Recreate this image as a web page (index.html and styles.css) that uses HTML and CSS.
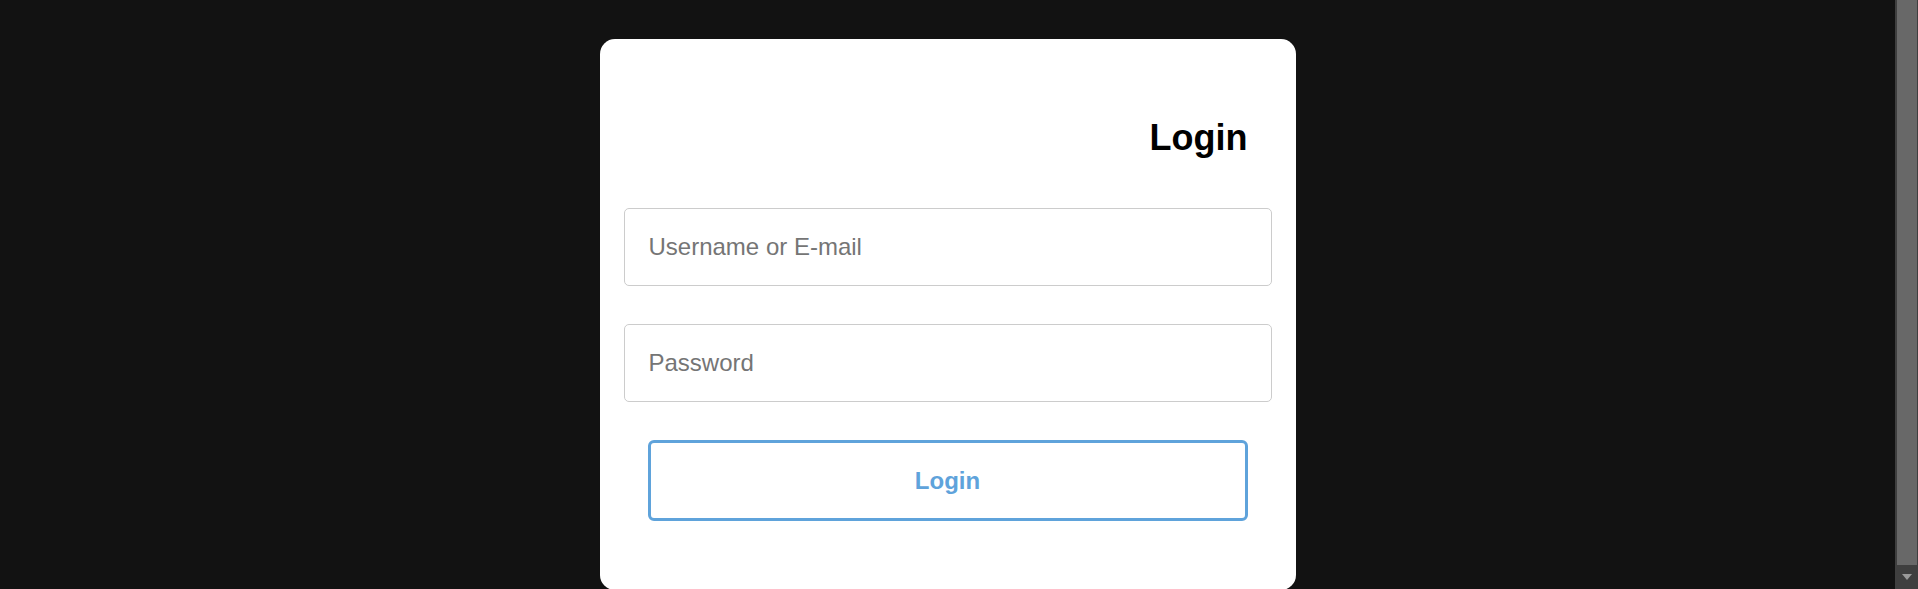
FILE: index.html
```html
<!DOCTYPE html>
<html lang="en">
<head>
<meta charset="utf-8">
<title>Login</title>
<link rel="stylesheet" href="styles.css">
</head>
<body>
<div class="page">
  <form class="card" onsubmit="return false">
    <h2 class="title">Login</h2>
    <input class="field field-user" type="text" placeholder="Username or E-mail">
    <input class="field field-pass" type="password" placeholder="Password">
    <button class="btn" type="submit">Login</button>
  </form>
</div>
<div class="scrollbar" aria-hidden="true">
  <div class="scroll-thumb"></div>
  <div class="scroll-arrow"><span class="arrow-down"></span></div>
</div>
</body>
</html>
```

FILE: styles.css
```css
html, body {
  margin: 0;
  padding: 0;
  height: 100%;
  overflow: hidden;
}

body {
  background: #121212;
  font-family: "Liberation Sans", Arial, sans-serif;
  display: flex;
}

.page {
  flex: 1;
  display: flex;
  justify-content: center;
  align-items: flex-start;
  padding-top: 39px;
  overflow: hidden;
}

.scrollbar {
  width: 23px;
  flex: none;
  height: 100%;
  background: #3f3f3f;
  display: flex;
  flex-direction: column;
  box-sizing: border-box;
  padding: 0 1px 0 2px;
}

.scroll-thumb {
  flex: 1;
  background: #686868;
}

.scroll-arrow {
  height: 24px;
  flex: none;
  display: flex;
  justify-content: center;
  align-items: center;
}

.arrow-down {
  width: 0;
  height: 0;
  border-left: 5px solid transparent;
  border-right: 5px solid transparent;
  border-top: 6px solid #9a9a9a;
}

.card {
  box-sizing: border-box;
  width: 696px;
  height: 551px;
  flex: none;
  background: #ffffff;
  border-radius: 15px;
  padding: 24px;
  display: flex;
  flex-direction: column;
  margin: 0;
}

.title {
  margin: 54px 24px 0 0;
  text-align: right;
  font-size: 36px;
  font-weight: bold;
  color: #000;
  line-height: 41px;
}

.field {
  box-sizing: border-box;
  height: 78px;
  width: 100%;
  border: 1px solid #cccccc;
  border-radius: 5px;
  padding: 0 24px;
  font-family: "Liberation Sans", Arial, sans-serif;
  font-size: 24px;
  color: #333;
  background: #fff;
  outline: none;
}

.field::placeholder {
  color: #757575;
}

.field-user {
  margin-top: 50px;
}

.field-pass {
  margin-top: 38px;
}

.btn {
  box-sizing: border-box;
  margin: 38px 24px 0;
  height: 81px;
  border: 3px solid #5fa3db;
  border-radius: 6px;
  background: #fff;
  color: #5fa3db;
  font-family: "Liberation Sans", Arial, sans-serif;
  font-size: 24px;
  font-weight: bold;
  cursor: pointer;
}
```
